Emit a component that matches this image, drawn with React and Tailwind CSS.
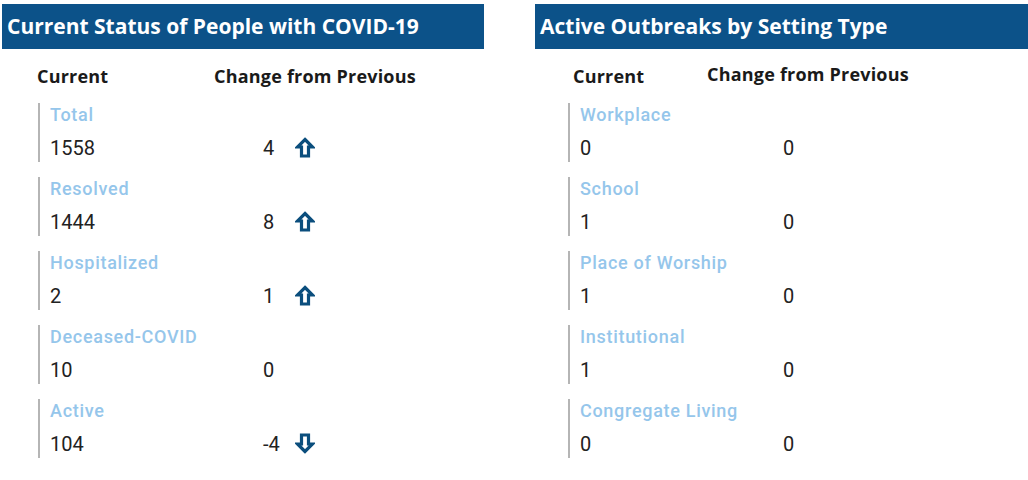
import React from 'react'

const leftRows = [
  { label: 'Total', value: '1558', change: '4', dir: 'up' },
  { label: 'Resolved', value: '1444', change: '8', dir: 'up' },
  { label: 'Hospitalized', value: '2', change: '1', dir: 'up' },
  { label: 'Deceased-COVID', value: '10', change: '0' },
  { label: 'Active', value: '104', change: '-4', dir: 'down' },
]

const rightRows = [
  { label: 'Workplace', value: '0', change: '0' },
  { label: 'School', value: '1', change: '0' },
  { label: 'Place of Worship', value: '1', change: '0' },
  { label: 'Institutional', value: '1', change: '0' },
  { label: 'Congregate Living', value: '0', change: '0' },
]

const Arrow = ({ dir }) => (
  <svg
    width="20"
    height="21"
    viewBox="0 0 20 21"
    className={dir === 'down' ? 'rotate-180' : ''}
  >
    <path
      d="M10 2.5 L17.5 10 L13.5 10 L13.5 19 L6.5 19 L6.5 10 L2.5 10 Z"
      fill="none"
      stroke="#0b4e7d"
      strokeWidth="3.2"
      strokeLinejoin="miter"
    />
  </svg>
)

const Row = ({ row, valueWidth }) => (
  <div className="h-[59px] border-l-2 border-[#b5b5b5] pl-[10px]">
    <div className="h-[24px] leading-[24px] text-[18px] font-medium tracking-[0.7px] text-[#95c6eb] font-['Roboto',sans-serif]">
      {row.label}
    </div>
    <div className="flex items-center pt-[6px] h-[35px] text-[20px] text-[#222] font-['Roboto',sans-serif]">
      <div className={valueWidth}>{row.value}</div>
      <div className="w-[32px]">{row.change}</div>
      {row.dir && <Arrow dir={row.dir} />}
    </div>
  </div>
)

const Panel = ({ title, rows, className, colsClass, currentPos, changePos, barPos, valueWidth }) => (
  <div className={className}>
    <div className="h-[45px] bg-[#0c5289] flex items-center pl-[5px] text-white text-[21px] font-bold font-['Open_Sans',sans-serif]">
      {title}
    </div>
    <div className={`flex h-[38px] items-center text-[18px] font-bold text-[#1a1a1a] font-['Open_Sans',sans-serif] tracking-[0.2px] ${colsClass}`}>
      <div className={currentPos}>Current</div>
      <div className={changePos}>Change from Previous</div>
    </div>
    <div className={`mt-[16px] flex flex-col gap-[15px] ${barPos}`}>
      {rows.map((r) => (
        <Row key={r.label} row={r} valueWidth={valueWidth} />
      ))}
    </div>
  </div>
)

export default function App() {
  return (
    <div className="w-[1028px] h-[480px] bg-white flex pt-[4px] pl-[2px] overflow-hidden">
      <Panel
        title="Current Status of People with COVID-19"
        rows={leftRows}
        className="w-[482px]"
        colsClass="pt-[16px]"
        currentPos="w-[212px] pl-[35px]"
        changePos=""
        barPos="ml-[36px]"
        valueWidth="w-[213px]"
      />
      <Panel
        title="Active Outbreaks by Setting Type"
        rows={rightRows}
        className="ml-[51px] w-[493px]"
        colsClass="pt-[12px]"
        currentPos="w-[172px] pl-[38px] pt-[4px]"
        changePos=""
        barPos="ml-[33px]"
        valueWidth="w-[203px]"
      />
    </div>
  )
}
